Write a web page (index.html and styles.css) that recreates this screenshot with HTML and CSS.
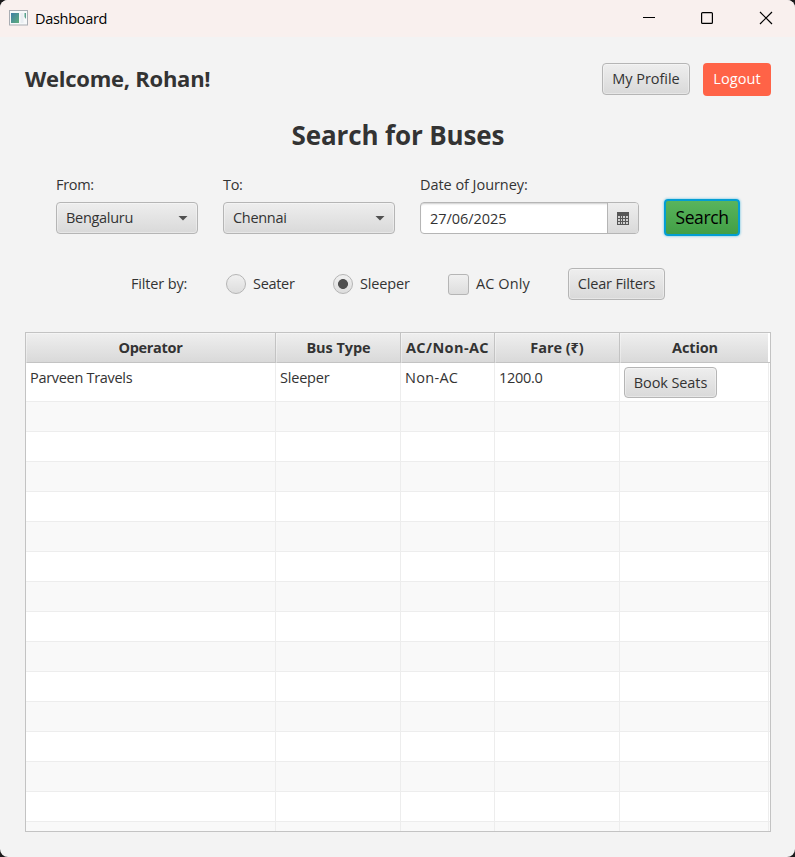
FILE: index.html
```html
<!DOCTYPE html>
<html lang="en">
<head>
<meta charset="utf-8">
<title>Dashboard</title>
<link rel="stylesheet" href="styles.css">
</head>
<body>
<div class="window">
  <header class="titlebar">
    <svg class="app-icon" width="19" height="16" viewBox="0 0 19 16">
      <defs><linearGradient id="app" x1="0" y1="0" x2="1" y2="1"><stop offset="0" stop-color="#3e7ea6"/><stop offset="1" stop-color="#5fae7c"/></linearGradient></defs>
      <rect x=".5" y=".5" width="18" height="14.5" fill="#f7f9fa" stroke="#a9adb3"/>
      <rect x="2" y="3" width="8" height="10" fill="url(#app)"/>
      <rect x="11.5" y="3" width="3" height="10" fill="#e9eef2"/>
      <path d="M15.5 3h1.5v6l-1.5-2z" fill="#58a28c"/>
    </svg>
    <span class="window-title">Dashboard</span>
    <svg class="controls" width="132" height="14" viewBox="0 0 132 14" fill="none" stroke="#000">
      <path d="M0 6.5h12" shape-rendering="crispEdges"/>
      <rect x="58.6" y="1.6" width="10.8" height="10.8" rx="1" stroke-width="1.2"/>
      <path d="M117 1l12 12M129 1l-12 12" stroke-width="1.2"/>
    </svg>
  </header>

  <main class="content">
    <div class="top">
      <h1 class="welcome">Welcome, Rohan!</h1>
      <button class="button profile">My Profile</button>
      <button class="logout">Logout</button>
    </div>

    <h2 class="heading">Search for Buses</h2>

    <div class="search-form">
      <div class="field from">
        <label class="label">From:</label>
        <div class="button select"><span>Bengaluru</span><i class="arrow"></i></div>
      </div>
      <div class="field to">
        <label class="label">To:</label>
        <div class="button select"><span>Chennai</span><i class="arrow"></i></div>
      </div>
      <div class="field date">
        <label class="label date-label">Date of Journey:</label>
        <div class="date-picker">
          <span class="date-value">27/06/2025</span>
          <span class="date-button">
            <svg width="12" height="13" viewBox="0 0 12 13" shape-rendering="crispEdges">
              <path d="M0 0h12v13H0z" fill="#575757"/>
              <path d="M1 4h2v2H1zM4 4h1v2H4zM6 4h2v2H6zM9 4h2v2H9zM1 7h2v2H1zM4 7h1v2H4zM6 7h2v2H6zM9 7h2v2H9zM1 10h2v2H1zM4 10h1v2H4zM6 10h2v2H6zM9 10h2v2H9z" fill="#d0d0d0"/>
            </svg>
          </span>
        </div>
      </div>
      <button class="search">Search</button>
    </div>

    <div class="filters">
      <span class="filter-label">Filter by:</span>
      <span class="radio"></span><span class="seater">Seater</span>
      <span class="radio selected"></span><span class="sleeper">Sleeper</span>
      <span class="checkbox"></span><span class="ac-only">AC Only</span>
      <button class="button clear">Clear Filters</button>
    </div>

    <div class="table">
      <div class="row head"><span><b>Operator</b></span><span><b class="h-type">Bus Type</b></span><span><b class="h-ac">AC/Non-AC</b></span><span><b class="h-fare">Fare (₹)</b></span><span><b class="h-action">Action</b></span></div>
      <div class="row first"><span>Parveen Travels</span><span class="c-type">Sleeper</span><span class="c-ac">Non-AC</span><span>1200.0</span><span><button class="button book">Book Seats</button></span></div>
      <div class="row"><span></span><span></span><span></span><span></span><span></span></div>
      <div class="row"><span></span><span></span><span></span><span></span><span></span></div>
      <div class="row"><span></span><span></span><span></span><span></span><span></span></div>
      <div class="row"><span></span><span></span><span></span><span></span><span></span></div>
      <div class="row"><span></span><span></span><span></span><span></span><span></span></div>
      <div class="row"><span></span><span></span><span></span><span></span><span></span></div>
      <div class="row"><span></span><span></span><span></span><span></span><span></span></div>
      <div class="row"><span></span><span></span><span></span><span></span><span></span></div>
      <div class="row"><span></span><span></span><span></span><span></span><span></span></div>
      <div class="row"><span></span><span></span><span></span><span></span><span></span></div>
      <div class="row"><span></span><span></span><span></span><span></span><span></span></div>
      <div class="row"><span></span><span></span><span></span><span></span><span></span></div>
      <div class="row"><span></span><span></span><span></span><span></span><span></span></div>
      <div class="row"><span></span><span></span><span></span><span></span><span></span></div>
      <div class="row"><span></span><span></span><span></span><span></span><span></span></div>
    </div>
  </main>
</div>
</body>
</html>
```
FILE: styles.css
```css
* { box-sizing: border-box; }
body { margin: 0; background: #1c1a1c; }
.window {
  width: 795px; height: 857px; overflow: hidden;
  border-radius: 8px; background: #f3f3f3;
  font: 14.5px/20px "Open Sans", "Noto Sans", sans-serif;
  letter-spacing: -0.3px; color: #333; white-space: nowrap;
}
button { font: inherit; letter-spacing: inherit; color: inherit; padding: 0; margin: 0; }

.titlebar { display: flex; height: 37px; padding: 10px 20px 0 9px; background: #f9f0ee; color: #000; }
.window-title { margin: -1px 0 0 7px; }
.controls { margin: 1px 0 0 auto; }

.content { padding: 26px 24px 0 25px; }
.top { display: flex; height: 33px; }
.welcome { margin: -1px auto 0 0; font-size: 22px; line-height: 32px; font-weight: 700; letter-spacing: -0.25px; }
.button {
  display: flex; align-items: center; justify-content: center; height: 32px;
  border: 1px solid #b5b5b5; border-radius: 4px;
  background: linear-gradient(#eeeeee, #d9d9d9);
  box-shadow: inset 0 0 0 1px rgba(255, 255, 255, .35);
}
.profile { width: 88px; margin-right: 13px; letter-spacing: -0.05px; }
.logout { width: 68px; height: 33px; padding-bottom: 2px; border: 0; border-radius: 4px; background: #ff6347; color: #fff; letter-spacing: 0.1px; }

.heading { margin: 19px 0 0; height: 41px; text-align: center; font-size: 26px; line-height: 40px; font-weight: 700; letter-spacing: -0.13px; }

.search-form { display: flex; margin: 19px 0 0 31px; height: 64px; }
.label { display: block; height: 27px; line-height: 20px; }
.date-label { letter-spacing: -0.05px; }
.from { width: 142px; margin-right: 25px; }
.to { width: 172px; margin-right: 25px; }
.date { width: 219px; margin-right: 25px; }
.select { justify-content: space-between; padding: 0 9px; }
.arrow { width: 10px; height: 5px; background: #505050; clip-path: polygon(0 0, 100% 0, 50% 100%); }
.date-picker { display: flex; height: 32px; border: 1px solid #b5b5b5; border-radius: 4px; background: #fff; box-shadow: inset 0 2px 2px -1px #ccc; overflow: hidden; }
.date-value { flex: 1; padding-left: 9px; line-height: 31px; letter-spacing: -0.05px; }
.date-button { display: flex; align-items: center; justify-content: center; width: 31px; border-left: 1px solid #b5b5b5; background: linear-gradient(#eeeeee, #d9d9d9); }
.search {
  width: 76px; height: 37px; margin-top: 24px; padding-bottom: 1px; border: 2px solid #039ed3; border-radius: 4px;
  background: linear-gradient(#59b45c, #429f46); color: #000; font-size: 17.5px; letter-spacing: -0.4px;
  box-shadow: 0 0 2px 1px rgba(3, 158, 211, .3);
}

.filters { display: flex; align-items: center; margin: 29px 0 0 106px; height: 32px; }
.filter-label { width: 95px; letter-spacing: -0.15px; }
.radio { width: 20px; height: 20px; border: 1px solid #b5b5b5; border-radius: 50%; background: linear-gradient(#f0f0f0, #dddddd); margin-right: 7px; }
.seater { width: 80px; }
.selected { background: radial-gradient(circle, #505050 4.6px, transparent 5.3px), linear-gradient(#f0f0f0, #dddddd); }
.sleeper { width: 88px; letter-spacing: -0.15px; }
.checkbox { width: 21px; height: 21px; border: 1px solid #b5b5b5; border-radius: 3px; background: linear-gradient(#f0f0f0, #dddddd); margin-right: 7px; }
.ac-only { width: 92px; letter-spacing: 0.1px; }
.clear { width: 97px; letter-spacing: -0.15px; }

.table { width: 746px; height: 500px; margin-top: 32px; border: 1px solid #c3c3c3; background: #fff; overflow: hidden; }
.row { display: grid; grid-template-columns: 250px 125px 94px 125px 149px; width: 744px; height: 30px; border-bottom: 1px solid #ededed; }
.row:nth-child(odd) { background: #f9f9f9; }
.row > span { border-right: 1px solid #ededed; }
.row.head { background: linear-gradient(90deg, transparent 742px, #fff 742px), linear-gradient(#efefef, #d9d9d9); border-bottom-color: #c3c3c3; text-align: center; line-height: 30px; }
.row.head > span { border-right-color: #c3c3c3; box-shadow: inset 1px 1px 0 rgba(255, 255, 255, .35); }
.row.head > span:last-child { border-right: 0; }
.h-type { letter-spacing: -0.05px; padding-left: 1px; }
.h-ac { letter-spacing: 0.4px; }
.h-fare { letter-spacing: -0.05px; }
.h-action { letter-spacing: -0.15px; padding-left: 1px; }
.row.first { height: 39px; line-height: 20px; }
.row.first > span { padding: 5px 4px 0; }
.c-type { letter-spacing: -0.2px; }
.row.first > .c-ac { letter-spacing: 0.3px; }
.row.first > span:last-child { padding-top: 4px; }
.book { width: 93px; height: 31px; letter-spacing: -0.1px; }
```
